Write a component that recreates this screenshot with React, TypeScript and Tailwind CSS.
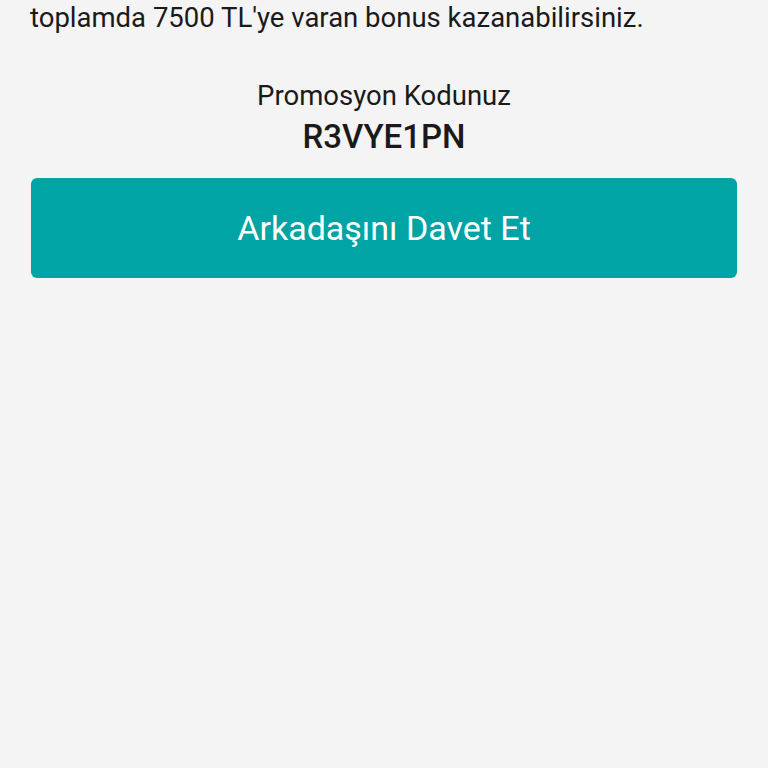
export default function App() {
  return (
    <div className="min-h-[768px] w-[768px] bg-[#f4f4f4] text-[#1a1a1a]" style={{ fontFamily: 'Roboto, "Liberation Sans", sans-serif' }}>
      <div className="px-[30px]">
        <p className="text-[27.5px] leading-[36px] whitespace-nowrap">toplamda 7500 TL'ye varan bonus kazanabilirsiniz.</p>
        <div className="mt-[42px] flex flex-col items-center">
          <div className="text-[27.5px] leading-[36px]">Promosyon Kodunuz</div>
          <div className="mt-[3px] text-[33px] leading-[40px] font-medium">R3VYE1PN</div>
        </div>
        <button className="mt-[21px] ml-[1px] w-[706px] h-[100px] rounded-[6px] bg-[#00a4a5] text-white text-[34px] flex items-center justify-center">
          Arkadaşını Davet Et
        </button>
      </div>
    </div>
  );
}
